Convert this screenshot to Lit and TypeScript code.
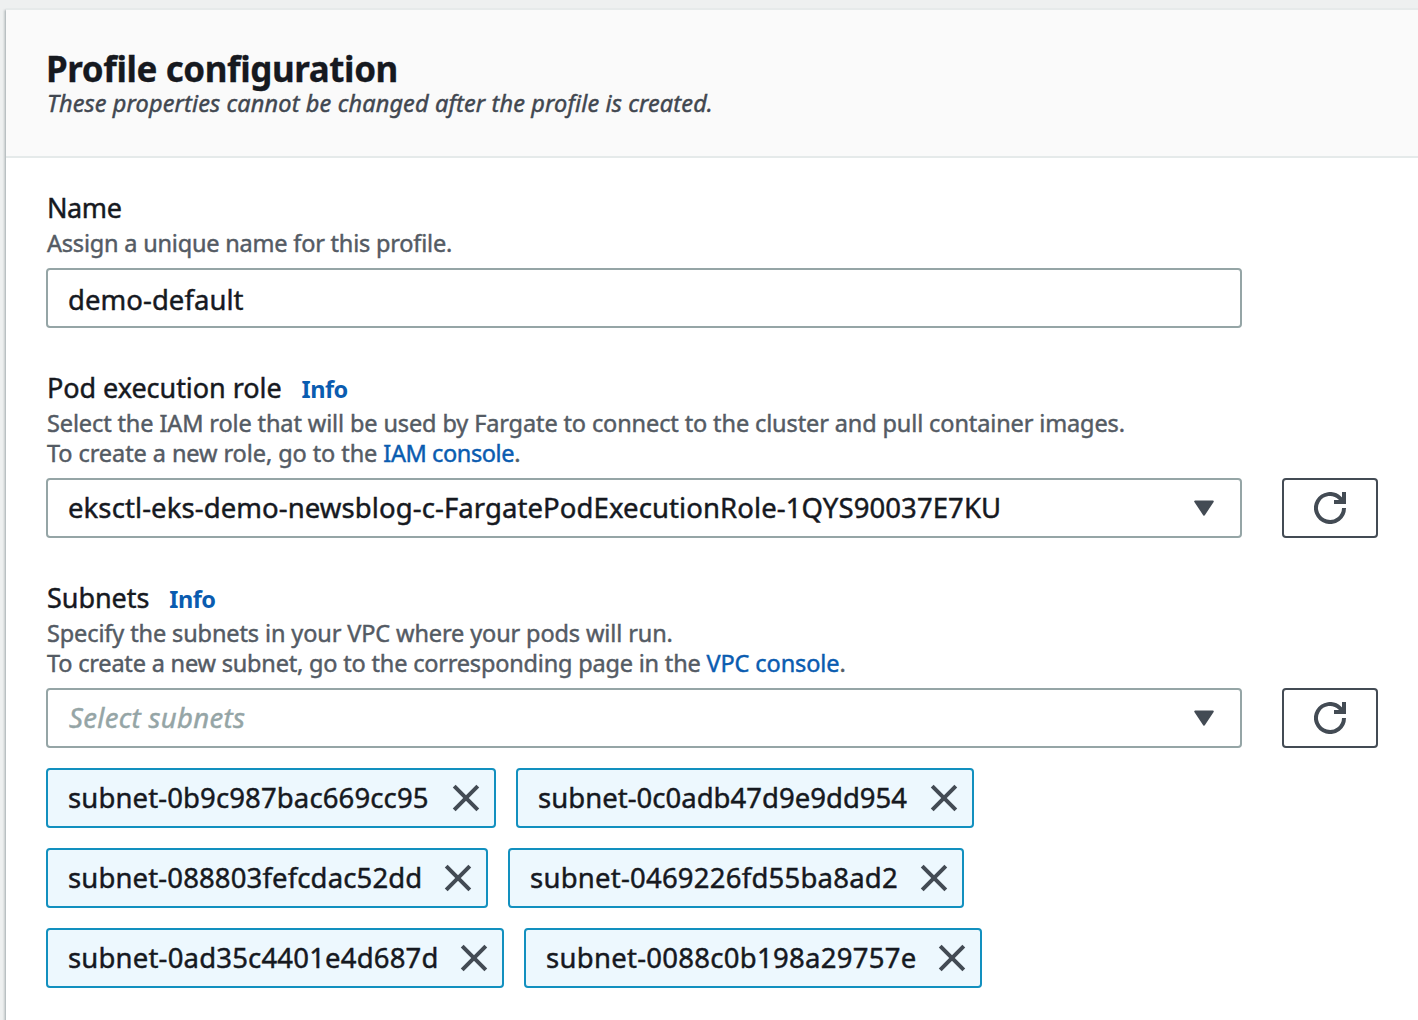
import { LitElement, html, css, svg } from "lit";
import { customElement, property } from "lit/decorators.js";
import { styleMap } from "lit/directives/style-map.js";

interface Token {
  id: string;
  width: number;
  tracking: number;
}

const TOKENS: Token[] = [
  { id: "subnet-0b9c987bac669cc95", width: 450, tracking: 0.12 },
  { id: "subnet-0c0adb47d9e9dd954", width: 458, tracking: 0.02 },
  { id: "subnet-088803fefcdac52dd", width: 442, tracking: 0.13 },
  { id: "subnet-0469226fd55ba8ad2", width: 456, tracking: 0.23 },
  { id: "subnet-0ad35c4401e4d687d", width: 458, tracking: 0.18 },
  { id: "subnet-0088c0b198a29757e", width: 458, tracking: 0.28 },
];

const caret = svg`<path d="M2.2 1.5 H19.8 L11 14.6 Z" fill="#434b54" stroke="#434b54" stroke-width="2" stroke-linejoin="round"/>`;

@customElement("refresh-button")
class RefreshButton extends LitElement {
  static styles = css`
    :host { display: block; }
    .button {
      box-sizing: border-box;
      display: flex;
      align-items: center;
      justify-content: center;
      width: 96px;
      height: 60px;
      padding: 0;
      border: 2px solid #434b54;
      border-radius: 4px;
      background: #fff;
    }
    .icon { display: block; width: 32px; height: 32px; }
  `;
  render() {
    return html`<button class="button" aria-label="Refresh">
      <svg class="icon" viewBox="0 0 32 32" fill="none" stroke="#434b54" stroke-width="4">
        <path d="M30 16 A14 14 0 1 1 25.9 6.1 L29 9.2" />
        <path d="M20 10 H30 V0" />
      </svg>
    </button>`;
  }
}

@customElement("subnet-token")
class SubnetToken extends LitElement {
  @property() label = "";
  @property({ type: Number }) tracking = 0;
  static styles = css`
    :host {
      box-sizing: border-box;
      display: flex;
      align-items: center;
      justify-content: space-between;
      height: 60px;
      padding: 0 14px 0 20px;
      border: 2px solid #1290bf;
      border-radius: 4px;
      background: #edf8fe;
      color: #16191f;
      white-space: nowrap;
    }
    .label { padding-bottom: 2px; }
    .icon { display: block; flex: none; width: 28px; height: 28px; }
  `;
  render() {
    return html`<span class="label" style=${styleMap({ letterSpacing: `${this.tracking}px` })}>${this.label}</span>
      <svg class="icon" viewBox="0 0 28 28" fill="none" stroke="#434b54" stroke-width="4">
        <path d="M2.2 2.2 L25.8 25.8 M25.8 2.2 L2.2 25.8" />
      </svg>`;
  }
}

@customElement("app-root")
class AppRoot extends LitElement {
  static styles = css`
    :host {
      box-sizing: border-box;
      display: block;
      height: 1020px;
      padding: 8px 0 0 6px;
      overflow: hidden;
      background: #eef0f0;
      color: #16191f;
      font-family: "Noto Sans", "Open Sans", sans-serif;
      -webkit-text-stroke: 0.45px currentColor;
    }
    .panel {
      box-sizing: border-box;
      width: 1432px;
      height: 1040px;
      border-top: 2px solid #e6eaea;
      background: #fff;
      box-shadow: 0 2px 2px rgba(0, 28, 36, 0.3), -2px 2px 2px rgba(0, 28, 36, 0.15);
    }
    .header {
      padding: 40px 41px 38px 40px;
      border-bottom: 2px solid #e5eaea;
      background: #fafafa;
    }
    .title {
      margin: 0;
      font-size: 35px;
      line-height: 38px;
      font-weight: 700;
      letter-spacing: -0.42px;
      -webkit-text-stroke: 0.3px currentColor;
    }
    .subtitle {
      padding-left: 1px;
      color: #414750;
      font-size: 23.5px;
      line-height: 30px;
      font-style: italic;
      letter-spacing: 0.13px;
    }
    .form {
      display: flex;
      flex-direction: column;
      gap: 40px;
      padding: 30px 40px;
    }
    .label {
      display: flex;
      align-items: baseline;
      gap: 20px;
      height: 40px;
      padding-left: 1px;
      font-size: 27px;
      line-height: 40px;
      letter-spacing: -0.05px;
    }
    .label-name { letter-spacing: -0.4px; }
    .info {
      color: #0a5cb0;
      font-size: 23.5px;
      font-weight: 700;
      letter-spacing: -0.5px;
      -webkit-text-stroke: 0;
    }
    .hint {
      padding-left: 1px;
      color: #545b64;
      font-size: 23.5px;
      line-height: 30px;
      letter-spacing: -0.12px;
      white-space: nowrap;
    }
    .hint-name { letter-spacing: -0.2px; }
    .hint-role { letter-spacing: -0.08px; }
    .hint-subnet { letter-spacing: -0.19px; }
    .link { color: #0a5cb0; }
    .link-iam { letter-spacing: -0.4px; }
    .link-vpc { letter-spacing: -0.1px; }
    .row { display: flex; gap: 40px; margin-top: 10px; }
    .field {
      box-sizing: border-box;
      display: flex;
      align-items: center;
      justify-content: space-between;
      width: 1196px;
      height: 60px;
      padding: 0 25px 0 20px;
      border: 2px solid #95a5a6;
      border-radius: 4px;
      background: #fff;
      font-size: 27.5px;
      white-space: nowrap;
    }
    .input { padding-top: 3px; letter-spacing: 0.05px; }
    .value { padding-bottom: 2px; letter-spacing: 0.09px; }
    .placeholder { padding: 0 0 2px 1px; color: #95a5a6; font-style: italic; letter-spacing: 0.34px; }
    .caret { display: block; width: 22px; height: 17px; }
    .tokens {
      display: flex;
      flex-wrap: wrap;
      gap: 20px;
      width: 980px;
      margin-top: 20px;
      font-size: 27.5px;
    }
  `;

  render() {
    return html`<main class="panel">
      <header class="header">
        <h2 class="title">Profile configuration</h2>
        <div class="subtitle">These properties cannot be changed after the profile is created.</div>
      </header>
      <div class="form">
        <section>
          <div class="label label-name">Name</div>
          <div class="hint hint-name">Assign a unique name for this profile.</div>
          <div class="row"><div class="field input">demo-default</div></div>
        </section>
        <section>
          <div class="label"><span>Pod execution role</span><a class="info">Info</a></div>
          <div class="hint">Select the IAM role that will be used by Fargate to connect to the cluster and pull container images.</div>
          <div class="hint hint-role">To create a new role, go to the <a class="link link-iam">IAM console</a>.</div>
          <div class="row">
            <div class="field">
              <span class="value">eksctl-eks-demo-newsblog-c-FargatePodExecutionRole-1QYS90037E7KU</span>
              <svg class="caret" viewBox="0 0 22 17">${caret}</svg>
            </div>
            <refresh-button></refresh-button>
          </div>
        </section>
        <section>
          <div class="label"><span>Subnets</span><a class="info">Info</a></div>
          <div class="hint">Specify the subnets in your VPC where your pods will run.</div>
          <div class="hint hint-subnet">To create a new subnet, go to the corresponding page in the <a class="link link-vpc">VPC console</a>.</div>
          <div class="row">
            <div class="field">
              <span class="placeholder">Select subnets</span>
              <svg class="caret" viewBox="0 0 22 17">${caret}</svg>
            </div>
            <refresh-button></refresh-button>
          </div>
          <div class="tokens">
            ${TOKENS.map((t) => html`<subnet-token .label=${t.id} .tracking=${t.tracking} style=${styleMap({ width: `${t.width}px` })}></subnet-token>`)}
          </div>
        </section>
      </div>
    </main>`;
  }
}
